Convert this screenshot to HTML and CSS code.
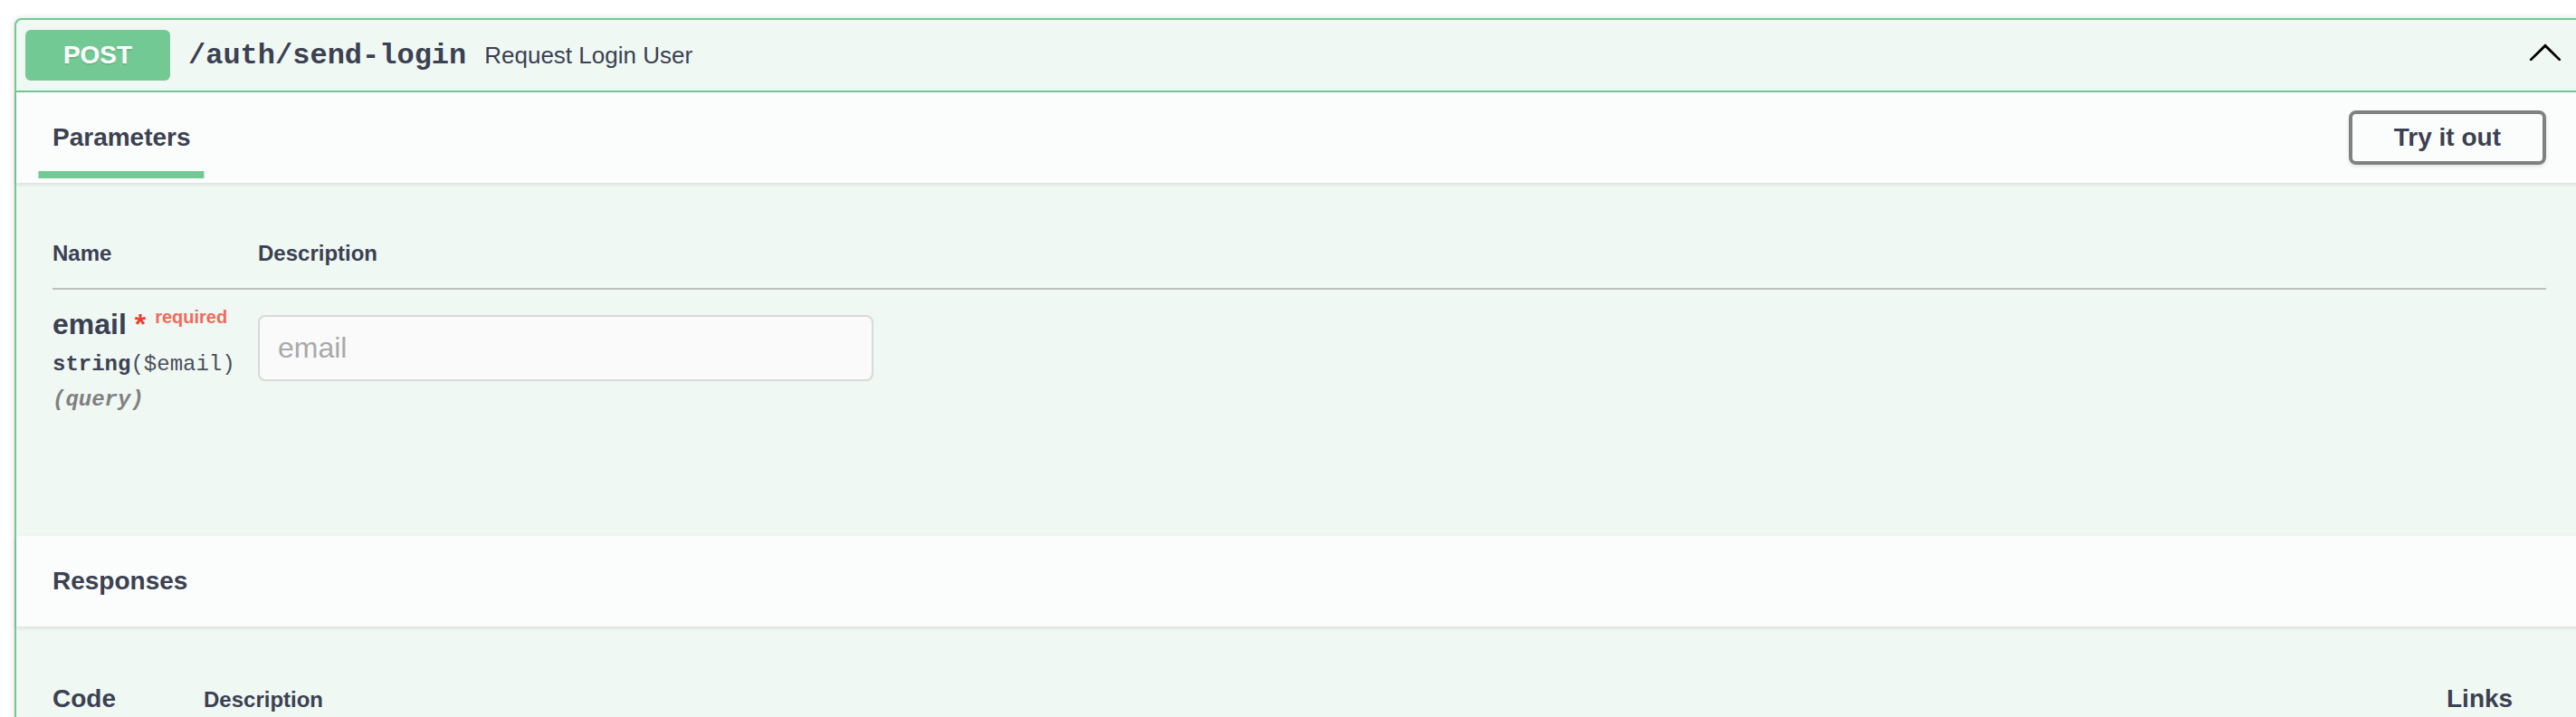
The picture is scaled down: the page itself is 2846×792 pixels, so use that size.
FILE: index.html
```html
<!DOCTYPE html>
<html lang="en">
<head>
<meta charset="utf-8">
<title>POST /auth/send-login</title>
<link rel="stylesheet" href="styles.css">
</head>
<body>
<div class="page">
  <div class="opblock">
    <div class="summary">
      <span class="method">POST</span>
      <span class="path">/auth/send-login</span>
      <span class="desc">Request Login User</span>
      <svg class="arrow" viewBox="0 0 20 20" width="40" height="40" aria-hidden="true">
        <path d="M17.418 14.908c.271.268.709.268.979 0 .27-.268.271-.701 0-.969l-7.908-7.83c-.27-.268-.707-.268-.979 0l-7.908 7.830c-.27.268-.27.701 0 .969.271.268.709.268.979 0L10 7.75l7.418 7.158z"/>
      </svg>
    </div>
    <div class="section-header">
      <div class="tab"><h4 class="tab-title"><span class="tab-label">Parameters</span></h4></div>
      <button class="try-btn" type="button">Try it out</button>
    </div>
    <div class="params-body">
      <div class="param-head">
        <div class="col-name">Name</div>
        <div class="col-desc">Description</div>
      </div>
      <div class="param-row">
        <div class="col-name">
          <div class="p-name">email<span class="star">&nbsp;*</span><span class="req">required</span></div>
          <div class="p-type">string<span class="fmt">($email)</span></div>
          <div class="p-in">(query)</div>
        </div>
        <div class="col-desc">
          <input class="p-input" type="text" placeholder="email" readonly>
        </div>
      </div>
    </div>
    <div class="section-header responses-header">
      <h4 class="tab-title">Responses</h4>
    </div>
    <div class="responses-body">
      <div class="resp-head">
        <div class="c-code">Code</div>
        <div class="c-desc">Description</div>
        <div class="c-links">Links</div>
      </div>
    </div>
  </div>
</div>
</body>
</html>
```
FILE: styles.css
```css
html, body {
  margin: 0;
  padding: 0;
  background: #ffffff;
  overflow: hidden;
}

body {
  font-family: "Liberation Sans", Arial, sans-serif;
  color: #3b4151;
}

.page {
  padding: 20px 0 0 16px;
  width: 2846px;
  height: 792px;
  box-sizing: border-box;
  overflow: hidden;
}

.opblock {
  width: 2839px;
  box-sizing: border-box;
  border: 2px solid #73c994;
  border-radius: 8px;
  background: #f0f8f4;
  box-shadow: 0 0 6px rgba(0, 0, 0, 0.15);
  min-height: 800px;
}

/* summary */
.summary {
  display: flex;
  align-items: center;
  padding: 11px 10px;
  border-bottom: 2px solid #73c994;
}

.method {
  width: 160px;
  height: 56px;
  display: flex;
  align-items: center;
  justify-content: center;
  background: #73c994;
  border-radius: 6px;
  color: #ffffff;
  font-size: 28px;
  font-weight: 700;
  text-shadow: 0 2px 0 rgba(0, 0, 0, 0.1);
}

.path {
  font-family: "Liberation Mono", "Courier New", monospace;
  font-size: 32px;
  font-weight: 700;
  padding: 0 20px;
  color: #3b4151;
}

.desc {
  flex: 1;
  font-size: 26px;
  color: #3b4151;
}

.arrow {
  fill: #000000;
  margin-right: 11px;
  margin-bottom: 8px;
}

/* section headers */
.section-header {
  display: flex;
  align-items: center;
  min-height: 100px;
  box-sizing: border-box;
  padding: 16px 40px;
  background: #fbfdfc;
  box-shadow: 0 2px 4px rgba(0, 0, 0, 0.1);
  position: relative;
}

.tab {
  flex: 1;
}

.tab-title {
  margin: 0;
  font-size: 28px;
  font-weight: 700;
  color: #3b4151;
}

.tab-label {
  position: relative;
}

.tab-label::after {
  content: "";
  position: absolute;
  left: 50%;
  bottom: -30px;
  width: 120%;
  height: 8px;
  transform: translateX(-50%);
  background: #73c994;
}

.try-btn {
  font-family: "Liberation Sans", Arial, sans-serif;
  font-size: 28px;
  font-weight: 700;
  color: #3b4151;
  background: transparent;
  border: 4px solid #808080;
  border-radius: 8px;
  padding: 10px 46px;
  box-shadow: 0 2px 4px rgba(0, 0, 0, 0.1);
}

/* parameters */
.params-body {
  min-height: 390px;
  box-sizing: border-box;
  padding: 40px;
}

.param-head {
  display: flex;
  align-items: baseline;
  padding: 24px 0;
  border-bottom: 2px solid #b9c0be;
  font-size: 24px;
  font-weight: 700;
  color: #3b4151;
}

.col-name {
  width: 227px;
  flex: none;
}

.col-desc {
  flex: 1;
}

.param-row {
  display: flex;
  align-items: flex-start;
  padding: 20px 0;
}

.p-name {
  font-size: 32px;
  font-weight: 700;
  color: #3b4151;
}

.star {
  color: #e8402f;
}

.req {
  position: relative;
  top: -12px;
  padding: 10px;
  font-size: 20px;
  font-weight: 700;
  color: #f06b5b;
}

.p-type {
  padding: 12px 0;
  font-family: "Liberation Mono", "Courier New", monospace;
  font-size: 24px;
  font-weight: 700;
  color: #3b4151;
}

.fmt {
  font-weight: 400;
  color: #4a4f5c;
}

.p-in {
  font-family: "Liberation Mono", "Courier New", monospace;
  font-size: 24px;
  font-weight: 700;
  font-style: italic;
  color: #808080;
}

.p-input {
  display: block;
  width: 680px;
  height: 73px;
  box-sizing: border-box;
  margin: 8px 0;
  padding: 8px 20px;
  border: 2px solid #d9d9d9;
  border-radius: 8px;
  background: #fafafa;
  font-family: "Liberation Sans", Arial, sans-serif;
  font-size: 32px;
  color: #888888;
  outline: none;
}

.p-input::placeholder {
  color: #a9a9a9;
}

/* responses */
.responses-body {
  padding: 40px;
}

.resp-head {
  display: flex;
  align-items: baseline;
  padding: 24px 0;
  font-weight: 700;
  color: #3b4151;
}

.c-code {
  width: 167px;
  flex: none;
  font-size: 28px;
}

.c-desc {
  flex: 1;
  font-size: 24px;
}

.c-links {
  width: 110px;
  flex: none;
  font-size: 28px;
}
```
